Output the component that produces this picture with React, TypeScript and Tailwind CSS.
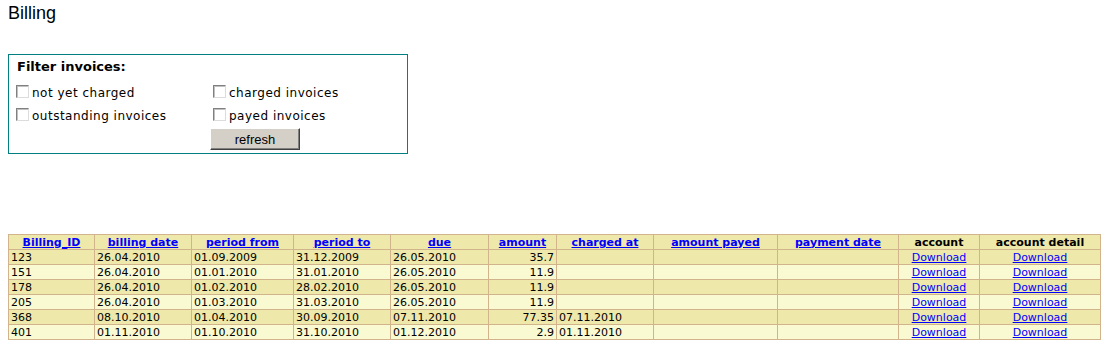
import { FC } from 'react';

type Invoice = {
  id: string;
  billingDate: string;
  periodFrom: string;
  periodTo: string;
  due: string;
  amount: string;
  chargedAt: string;
};

const INVOICES: Invoice[] = [
  { id: '123', billingDate: '26.04.2010', periodFrom: '01.09.2009', periodTo: '31.12.2009', due: '26.05.2010', amount: '35.7', chargedAt: '' },
  { id: '151', billingDate: '26.04.2010', periodFrom: '01.01.2010', periodTo: '31.01.2010', due: '26.05.2010', amount: '11.9', chargedAt: '' },
  { id: '178', billingDate: '26.04.2010', periodFrom: '01.02.2010', periodTo: '28.02.2010', due: '26.05.2010', amount: '11.9', chargedAt: '' },
  { id: '205', billingDate: '26.04.2010', periodFrom: '01.03.2010', periodTo: '31.03.2010', due: '26.05.2010', amount: '11.9', chargedAt: '' },
  { id: '368', billingDate: '08.10.2010', periodFrom: '01.04.2010', periodTo: '30.09.2010', due: '07.11.2010', amount: '77.35', chargedAt: '07.11.2010' },
  { id: '401', billingDate: '01.11.2010', periodFrom: '01.10.2010', periodTo: '31.10.2010', due: '01.12.2010', amount: '2.9', chargedAt: '01.11.2010' },
];

const COL_WIDTHS = [86, 97, 102, 97, 98, 68, 97, 124, 121, 81, 121];

const SORT_HEADERS = ['Billing_ID', 'billing date', 'period from', 'period to', 'due', 'amount', 'charged at', 'amount payed', 'payment date'];

const Checkbox: FC<{ label: string }> = ({ label }) => (
  <label className="flex items-center gap-[3px] h-[23px]">
    <span className="block w-[13px] h-[13px] bg-white border border-t-[#808080] border-l-[#808080] border-r-[#dcdcdc] border-b-[#dcdcdc] shadow-[inset_1px_1px_0_#c0c0c0]" />
    <span className="pt-[3px] tracking-[0.5px]">{label}</span>
  </label>
);

const Cell: FC<{ children?: React.ReactNode; right?: boolean; center?: boolean }> = ({ children, right, center }) => (
  <td
    className={
      'border border-[#d2b48c] px-[2px] py-0 h-[15px] leading-[13px] whitespace-nowrap ' +
      (right ? 'text-right' : center ? 'text-center' : 'text-left')
    }
  >
    {children}
  </td>
);

const DownloadLink: FC = () => (
  <a href="#" className="text-[#0000ff] underline">
    Download
  </a>
);

const App: FC = () => {
  return (
    <div className="bg-white w-[1114px] h-[352px] text-black">
      <h1 className="ml-2 mt-[3px] leading-[20px] text-[18px] font-['Liberation_Sans',Arial,sans-serif]">Billing</h1>

      {/* Filter box */}
      <div className="ml-2 mt-[31px] w-[400px] h-[100px] border border-[#008080] pl-[7px] pt-[4px] font-['DejaVu_Sans',Verdana,sans-serif]">
        <div className="pl-[1px] text-[13px] font-bold leading-[16px]">Filter invoices:</div>
        <div className="mt-[5px] grid grid-cols-[194px_auto] text-[12px]">
          <Checkbox label="not yet charged" />
          <div className="pl-[3px]">
            <Checkbox label="charged invoices" />
          </div>
          <Checkbox label="outstanding invoices" />
          <div className="pl-[3px]">
            <Checkbox label="payed invoices" />
          </div>
          <div />
          <div>
            <button className="mt-[2px] w-[90px] h-[22px] bg-[#d4d0c8] border border-t-white border-l-white border-r-[#404040] border-b-[#404040] shadow-[inset_-1px_-1px_0_#808080] text-[13px] font-['Liberation_Sans',Arial,sans-serif] leading-none">
              refresh
            </button>
          </div>
        </div>
      </div>

      {/* Invoice table */}
      <table className="ml-2 mt-[80px] w-[1093px] table-fixed border-collapse border border-[#d2b48c] text-[11px] font-['DejaVu_Sans',Verdana,sans-serif]">
        <colgroup>
          {COL_WIDTHS.map((w, i) => (
            <col key={i} style={{ width: w }} />
          ))}
        </colgroup>
        <thead>
          <tr className="bg-[#eee8aa]">
            {SORT_HEADERS.map((h) => (
              <th key={h} className="border border-[#d2b48c] px-[2px] py-0 h-[15px] leading-[13px] text-center font-bold whitespace-nowrap">
                <a href="#" className="text-[#0000ff] underline">
                  {h}
                </a>
              </th>
            ))}
            <th className="border border-[#d2b48c] px-[2px] py-0 h-[15px] leading-[13px] text-center font-bold">account</th>
            <th className="border border-[#d2b48c] px-[2px] py-0 h-[15px] leading-[13px] text-center font-bold">account detail</th>
          </tr>
        </thead>
        <tbody>
          {INVOICES.map((inv, i) => (
            <tr key={inv.id} className={i % 2 === 0 ? 'bg-[#eee8aa]' : 'bg-[#fafad2]'}>
              <Cell>{inv.id}</Cell>
              <Cell>{inv.billingDate}</Cell>
              <Cell>{inv.periodFrom}</Cell>
              <Cell>{inv.periodTo}</Cell>
              <Cell>{inv.due}</Cell>
              <Cell right>{inv.amount}</Cell>
              <Cell>{inv.chargedAt}</Cell>
              <Cell />
              <Cell />
              <Cell center>
                <DownloadLink />
              </Cell>
              <Cell center>
                <DownloadLink />
              </Cell>
            </tr>
          ))}
        </tbody>
      </table>
    </div>
  );
};

export default App;
